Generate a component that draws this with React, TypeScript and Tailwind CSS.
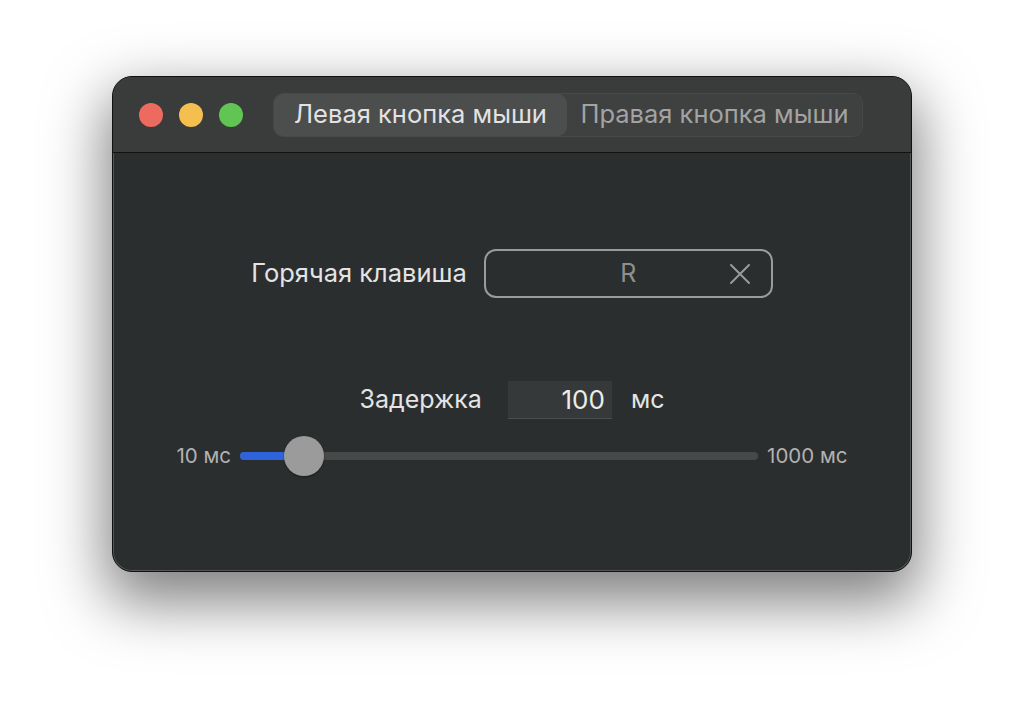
export default function App() {
  return (
    <div
      className="w-[1024px] h-[720px] bg-white flex justify-center pt-[76px]"
      style={{ fontFamily: 'Inter, "Noto Sans", sans-serif' }}
    >
      <div className="w-[800px] h-[496px] rounded-[20px] bg-[#2b2e2f] border border-[#111] shadow-[0_24px_60px_6px_rgba(0,0,0,0.5)] overflow-hidden flex flex-col ring-1 ring-inset ring-[#555]">
        {/* title bar */}
        <div className="h-[76px] bg-[#3a3b3b] border-b border-[#121212] flex items-center pl-[26px] shrink-0">
          <div className="flex gap-[16px]">
            <div className="w-[24px] h-[24px] rounded-full bg-[#ed6a5e]" />
            <div className="w-[24px] h-[24px] rounded-full bg-[#f5bf4f]" />
            <div className="w-[24px] h-[24px] rounded-full bg-[#61c554]" />
          </div>
          <div className="ml-[30px] w-[590px] h-[44px] rounded-[10px] bg-[#3f4040] border border-[#474848] flex text-[25.5px]">
            <div className="w-[293px] rounded-[9px] bg-[#4c4d4d] flex items-center justify-center text-[#e2e2e2]">
              Левая кнопка мыши
            </div>
            <div className="flex-1 flex items-center justify-center text-[#a3a3a3]">
              Правая кнопка мыши
            </div>
          </div>
        </div>

        {/* body */}
        <div className="flex-1 flex flex-col items-center">
          <div className="mt-[96px] flex items-center gap-[17px]">
            <span className="text-[25.5px] text-[#e4e4e4]">Горячая клавиша</span>
            <div className="w-[289px] h-[49px] rounded-[12px] border-2 border-[#9b9b9b] flex items-center relative">
              <span className="flex-1 text-center text-[25px] text-[#8f8f8f]">R</span>
              <svg
                className="absolute right-[20px]"
                width="22"
                height="22"
                viewBox="0 0 22 22"
                fill="none"
                stroke="#9a9a9a"
                strokeWidth="2"
                strokeLinecap="round"
              >
                <path d="M2 2 L20 20 M20 2 L2 20" />
              </svg>
            </div>
          </div>

          <div className="mt-[83px] flex items-center">
            <span className="text-[25px] text-[#e4e4e4]">Задержка</span>
            <div className="ml-[26px] w-[104px] h-[38px] bg-[#363939] border-b border-[#4a4d4d] flex items-center justify-end pr-[7px] text-[26px] text-[#ececec]">
              100
            </div>
            <span className="ml-[19px] text-[25px] text-[#e4e4e4]">мс</span>
          </div>

          <div className="mt-[17px] flex items-center gap-[9px]">
            <span className="text-[20.5px] text-[#b2b2b2]">10 мс</span>
            <div className="w-[518px] h-[40px] flex items-center relative">
              <div className="w-full h-[8px] rounded-full bg-[#474848] flex">
                <div className="w-[64px] h-full rounded-full bg-[#2f63dc]" />
              </div>
              <div className="absolute left-[44px] w-[40px] h-[40px] rounded-full bg-[#9b9b9b] shadow-[0_1px_2px_rgba(0,0,0,0.4)]" />
            </div>
            <span className="text-[20.5px] text-[#b2b2b2]">1000 мс</span>
          </div>
        </div>
      </div>
    </div>
  )
}
